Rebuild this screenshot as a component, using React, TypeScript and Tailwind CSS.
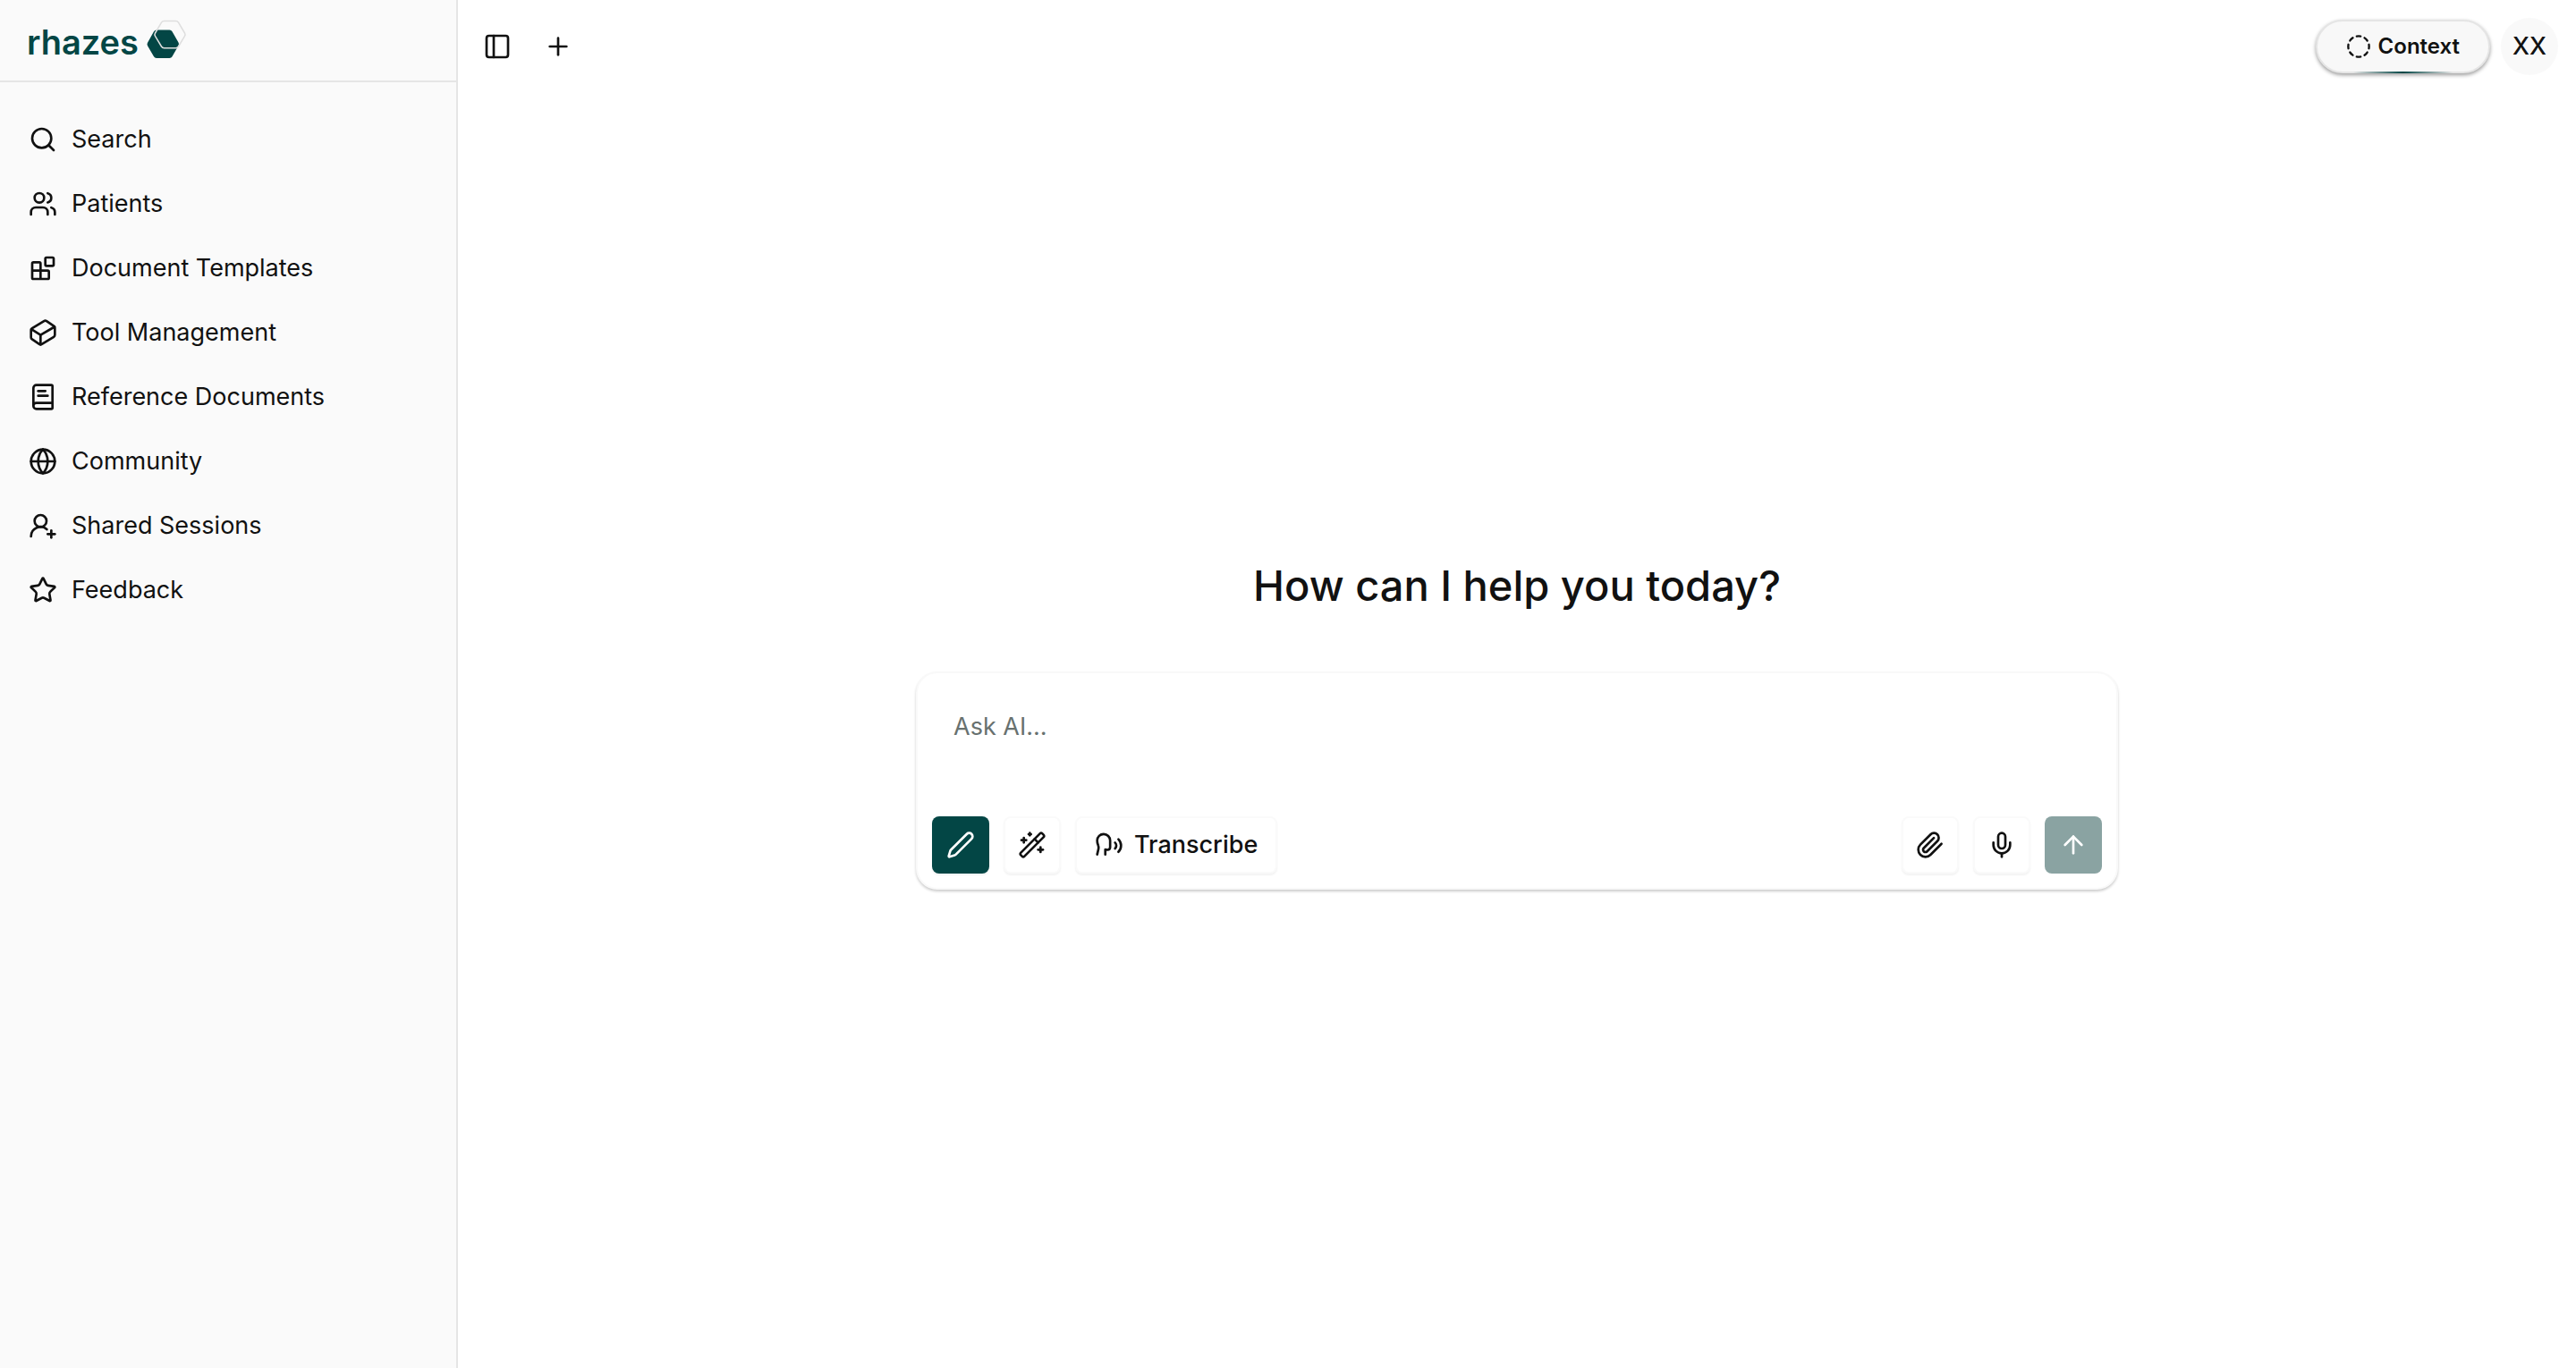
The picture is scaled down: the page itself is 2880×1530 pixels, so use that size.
import { useState } from "react";
import {
  ArrowUp,
  BookText,
  CircleDashed,
  Cuboid,
  Globe,
  Mic,
  PanelLeft,
  Pen,
  Plus,
  Search,
  Speech,
  Star,
  UserRoundPlus,
  Users,
  WandSparkles,
} from "lucide-react";

const navItems = [
  { label: "Search", icon: Search },
  { label: "Patients", icon: Users },
  { label: "Document Templates", icon: BlocksIcon },
  { label: "Tool Management", icon: Cuboid },
  { label: "Reference Documents", icon: BookText },
  { label: "Community", icon: Globe },
  { label: "Shared Sessions", icon: UserRoundPlus },
  { label: "Feedback", icon: Star },
];

const toolButton =
  "flex h-16 items-center justify-center rounded-lg border-2 border-[#fafafa] bg-white shadow-[0_2px_2px_rgba(0,0,0,0.05)]";

function BlocksIcon({ className }: { className?: string }) {
  return (
    <svg
      viewBox="0 0 24 24"
      className={className}
      fill="none"
      stroke="currentColor"
      strokeWidth="2"
      strokeLinecap="round"
      strokeLinejoin="round"
    >
      <rect width="7" height="7" x="14" y="3" rx="1" />
      <path d="M10 21V8a1 1 0 0 0-1-1H4a1 1 0 0 0-1 1v12a1 1 0 0 0 1 1h12a1 1 0 0 0 1-1v-5a1 1 0 0 0-1-1H3" />
    </svg>
  );
}

function PaperclipIcon({ className }: { className?: string }) {
  return (
    <svg
      viewBox="0 0 24 24"
      className={className}
      fill="none"
      stroke="currentColor"
      strokeWidth="2"
      strokeLinecap="round"
      strokeLinejoin="round"
    >
      <path d="m21.44 11.05-9.19 9.19a6 6 0 0 1-8.49-8.49l8.57-8.57A4 4 0 1 1 18 8.84l-8.59 8.57a2 2 0 0 1-2.83-2.83l8.49-8.48" />
    </svg>
  );
}

function Logo() {
  return (
    <a href="#" className="flex items-center gap-1.5 text-[#034645]">
      <span className="pt-1 text-[38px] leading-12 font-semibold">rhazes</span>
      <svg viewBox="0 0 48 48" className="size-12" fill="none">
        <path
          d="M14 12.5h14.5q2 0 3 1.7l7 12.3q1 1.7 0 3.4l-7 12.3q-1 1.7-3 1.7H14q-2 0-3-1.7L4 30.2q-1-1.7 0-3.4l7-12.6q1-1.7 3-1.7Z"
          fill="currentColor"
        />
        <path
          d="M22.5 2.5h13q2 0 3 1.7l7 11.8q1 1.7 0 3.4l-7 11.6q-1 1.7-3 1.7h-13q-2 0-3-1.7l-7-11.6q-1-1.7 0-3.4l7-11.8q1-1.7 3-1.7Z"
          stroke="#dedede"
          strokeWidth="1.5"
        />
      </svg>
    </a>
  );
}

function Sidebar() {
  return (
    <aside className="w-[512px] shrink-0 border-r-2 border-[#e5e5e5] bg-[#fafafa]">
      <div className="flex h-23 items-center border-b-2 border-[#e5e5e5] px-7.5">
        <Logo />
      </div>
      <nav className="flex flex-col gap-2 px-4 py-8">
        {navItems.map(({ label, icon: Icon }) => (
          <a
            key={label}
            href="#"
            className="flex h-16 items-center gap-4 rounded-lg px-4 text-[27px] leading-10"
          >
            <Icon className="size-8" />
            {label}
          </a>
        ))}
      </nav>
    </aside>
  );
}

function TopBar() {
  return (
    <header className="flex h-26 items-center justify-between pr-5 pl-3">
      <div className="flex items-center gap-1">
        <button
          aria-label="Toggle sidebar"
          className="flex size-16 items-center justify-center"
        >
          <PanelLeft className="size-8" />
        </button>
        <button
          aria-label="New session"
          className="flex size-16 items-center justify-center"
        >
          <Plus className="size-8" />
        </button>
      </div>

      <div className="flex items-center gap-3">
        <button className="relative flex h-15 items-center gap-2 rounded-full border-2 border-[#e5e5e5] bg-[#f8f8f8] px-8 text-2xl font-semibold shadow-[0_2px_4px_rgba(0,0,0,0.4)]">
          <CircleDashed className="size-7" />
          Context
          <span className="absolute inset-x-10 -bottom-0.5 h-0.5 bg-linear-to-r from-transparent via-[#034645] to-transparent" />
        </button>
        <button className="size-16 rounded-full bg-[#f9f9f9] text-[27px] font-medium">
          XX
        </button>
      </div>
    </header>
  );
}

function Composer() {
  const [prompt, setPrompt] = useState("");

  return (
    <form
      onSubmit={(event) => event.preventDefault()}
      className="flex w-full max-w-[1344px] flex-col gap-4 rounded-3xl border-2 border-[#f9f9f9] bg-white p-4 shadow-[0_2px_3px_rgba(0,0,0,0.2)]"
    >
      <textarea
        aria-label="Ask AI"
        placeholder="Ask AI…"
        value={prompt}
        onChange={(event) => setPrompt(event.target.value)}
        className="h-32 resize-none p-6 text-[27px] leading-10 outline-none placeholder:text-[#68716f]"
      />

      <div className="flex items-center justify-between">
        <div className="flex gap-4">
          <button
            type="button"
            aria-label="Write"
            className="flex size-16 items-center justify-center rounded-lg bg-[#034645] text-white shadow-[0_2px_2px_rgba(0,0,0,0.05)]"
          >
            <Pen className="size-8" />
          </button>
          <button
            type="button"
            aria-label="Enhance"
            className={`${toolButton} w-16`}
          >
            <WandSparkles className="size-8" />
          </button>
          <button
            type="button"
            className={`${toolButton} gap-3 px-5 text-[27px] font-medium`}
          >
            <Speech className="size-8" />
            Transcribe
          </button>
        </div>

        <div className="flex gap-4">
          <button
            type="button"
            aria-label="Attach file"
            className={`${toolButton} w-16`}
          >
            <PaperclipIcon className="size-8" />
          </button>
          <button
            type="button"
            aria-label="Dictate"
            className={`${toolButton} w-16`}
          >
            <Mic className="size-8" />
          </button>
          <button
            type="submit"
            aria-label="Send"
            className="flex size-16 items-center justify-center rounded-lg bg-[#8aa3a2] text-white"
          >
            <ArrowUp className="size-8" />
          </button>
        </div>
      </div>
    </form>
  );
}

export default function App() {
  return (
    <div className="flex min-h-screen bg-white font-['Inter',sans-serif] text-[#111111]">
      <Sidebar />
      <div className="flex min-w-0 flex-1 flex-col">
        <TopBar />
        <main className="flex flex-1 flex-col items-center justify-center gap-16 px-8 pb-4">
          <h1 className="text-[47px] leading-16 font-medium">
            How can I help you today?
          </h1>
          <Composer />
        </main>
      </div>
    </div>
  );
}
